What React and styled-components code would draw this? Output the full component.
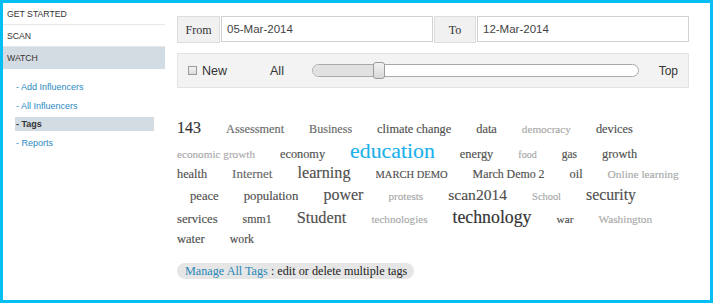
import React from 'react';
import styled, { createGlobalStyle } from 'styled-components';

const GlobalStyle = createGlobalStyle`
  html, body {
    margin: 0;
    padding: 0;
    background: #fff;
  }
  * {
    box-sizing: border-box;
  }
`;

const TONES = {
  dark: '#333333',
  mid: '#6a6a6a',
  norm: '#505050',
  light: '#a9a9a9',
  accent: '#1cb1ec'
};

// [text, font size, tone]
const TAG_ROWS = [
  {
    indent: 0,
    tags: [
      ['143', 16, 'dark'],
      ['Assessment', 12.3, 'mid'],
      ['Business', 12.1, 'mid'],
      ['climate change', 12.3, 'norm'],
      ['data', 12.4, 'norm'],
      ['democracy', 11.2, 'light'],
      ['devices', 12.3, 'norm']
    ]
  },
  {
    indent: 0,
    tags: [
      ['economic growth', 11.2, 'light'],
      ['economy', 12.3, 'norm'],
      ['education', 21.8, 'accent'],
      ['energy', 12.4, 'norm'],
      ['food', 10, 'light'],
      ['gas', 11.5, 'norm'],
      ['growth', 12.4, 'norm']
    ]
  },
  {
    indent: 0,
    tags: [
      ['health', 12.3, 'norm'],
      ['Internet', 13, 'mid'],
      ['learning', 16.2, 'norm'],
      ['MARCH DEMO', 10.5, 'norm'],
      ['March Demo 2', 11.9, 'norm'],
      ['oil', 12.3, 'norm'],
      ['Online learning', 11.4, 'light']
    ]
  },
  {
    indent: 13,
    tags: [
      ['peace', 12.6, 'norm'],
      ['population', 12.8, 'norm'],
      ['power', 16, 'norm'],
      ['protests', 11.2, 'light'],
      ['scan2014', 15.6, 'norm'],
      ['School', 10.4, 'light'],
      ['security', 15.8, 'norm']
    ]
  },
  {
    indent: 0,
    tags: [
      ['services', 12.6, 'norm'],
      ['smm1', 11.9, 'norm'],
      ['Student', 16.3, 'norm'],
      ['technologies', 11.1, 'light'],
      ['technology', 17.8, 'dark'],
      ['war', 11.3, 'norm'],
      ['Washington', 11.3, 'light']
    ]
  },
  {
    indent: 0,
    tags: [
      ['water', 12.5, 'norm'],
      ['work', 11.8, 'norm']
    ]
  }
];

const Frame = styled.div`
  width: 713px;
  height: 303px;
  border: 3px solid #05bff4;
  display: flex;
  background: #fff;
  overflow: hidden;
`;

const Sidebar = styled.div`
  width: 162px;
  flex-shrink: 0;
  display: flex;
  flex-direction: column;
`;

const NavItem = styled.div`
  height: 22px;
  line-height: 23px;
  padding-left: 4px;
  font-family: "Liberation Sans", Arial, sans-serif;
  font-size: 8.7px;
  color: #333;
  border-bottom: 1px solid ${props => (props.$active ? '#d3dce3' : '#e8e8e8')};
  background: ${props => (props.$active ? '#d3dce3' : 'transparent')};
`;

const SubList = styled.div`
  margin-top: 11px;
  padding: 0 11px 0 12px;
  display: flex;
  flex-direction: column;
  gap: 4.6px;
`;

const SubLink = styled.div`
  height: 14px;
  line-height: 14px;
  padding-left: 1px;
  font-family: "Liberation Sans", Arial, sans-serif;
  font-size: 9px;
  color: ${props => (props.$active ? '#333' : '#2b8ac2')};
  font-weight: ${props => (props.$active ? 'bold' : 'normal')};
  background: ${props => (props.$active ? '#d3dce3' : 'transparent')};
`;

const Main = styled.div`
  flex: 1;
  padding: 13px 21px 0 12px;
  display: flex;
  flex-direction: column;
  align-items: stretch;
`;

const DateBar = styled.div`
  display: flex;
  gap: 1px;
  height: 27px;
`;

const DateLabel = styled.div`
  width: ${props => props.$width}px;
  flex-shrink: 0;
  background: #f1f1f1;
  border: 1px solid #dddddd;
  font-family: "Liberation Serif", Georgia, serif;
  font-size: 12px;
  color: #333;
  text-align: center;
  line-height: 26px;
`;

const DateField = styled.div`
  flex: 1;
  height: 26px;
  border: 1px solid #d2d2d2;
  background: #fff;
  padding-left: 5px;
  font-family: "Liberation Sans", Arial, sans-serif;
  font-size: 11.5px;
  color: #444;
  line-height: 24px;
`;

const FilterBar = styled.div`
  margin-top: 10px;
  height: 35px;
  border: 1px solid #e3e3e3;
  background: #f3f3f3;
  display: flex;
  align-items: center;
  padding: 0 10px 0 10px;
  font-family: "Liberation Sans", Arial, sans-serif;
  color: #333;
`;

const CheckBox = styled.span`
  width: 9px;
  height: 9px;
  border: 1px solid #9a9a9a;
  background: linear-gradient(#f4f4f4, #dcdcdc);
  margin-right: 5px;
  flex-shrink: 0;
`;

const BarText = styled.span`
  font-size: ${props => props.$size}px;
  margin-left: ${props => props.$ml || 0}px;
`;

const Track = styled.div`
  position: relative;
  flex: 1;
  height: 13px;
  margin: 0 20px 0 28px;
  border: 1px solid #a9a9a9;
  border-radius: 7px;
  background: #fff;
`;

const TrackFill = styled.div`
  height: 100%;
  background: #e1e1e1;
  border-radius: 6px 0 0 6px;
`;

const Thumb = styled.div`
  position: absolute;
  top: -3px;
  width: 12px;
  height: 17px;
  margin-left: -1px;
  border: 1px solid #9c9c9c;
  border-radius: 3px;
  background: linear-gradient(#f2f2f2, #d9d9d9);
`;

const TagCloud = styled.div`
  margin-top: 29px;
  display: flex;
  flex-direction: column;
`;

const TagRow = styled.div`
  display: flex;
  align-items: baseline;
  column-gap: 25px;
  height: ${props => props.$height}px;
  padding-left: ${props => props.$indent}px;
`;

const Tag = styled.span`
  font-family: "Liberation Serif", Georgia, serif;
  font-size: ${props => props.$size}px;
  color: ${props => TONES[props.$tone]};
  white-space: nowrap;
  line-height: 22px;
  -webkit-text-stroke: 0.15px ${props => TONES[props.$tone]};
`;

const ManagePill = styled.div`
  margin-top: 13px;
  align-self: flex-start;
  height: 16px;
  line-height: 16px;
  padding: 0 7px 0 8px;
  border-radius: 8px;
  background: #e6e6e6;
  font-family: "Liberation Serif", Georgia, serif;
  font-size: 12.2px;
  color: #222;
  white-space: nowrap;
`;

const ManageLink = styled.span`
  color: #2786b8;
`;

const sliderValue = 18.8;

export default function App() {
  return (
    <>
      <GlobalStyle />
      <Frame>
        <Sidebar>
          <NavItem>GET STARTED</NavItem>
          <NavItem>SCAN</NavItem>
          <NavItem $active>WATCH</NavItem>
          <SubList>
            <SubLink>- Add Influencers</SubLink>
            <SubLink>- All Influencers</SubLink>
            <SubLink $active>- Tags</SubLink>
            <SubLink>- Reports</SubLink>
          </SubList>
        </Sidebar>
        <Main>
          <DateBar>
            <DateLabel $width={43}>From</DateLabel>
            <DateField>05-Mar-2014</DateField>
            <DateLabel $width={42}>To</DateLabel>
            <DateField>12-Mar-2014</DateField>
          </DateBar>
          <FilterBar>
            <CheckBox />
            <BarText $size={12.5}>New</BarText>
            <BarText $size={12.5} $ml={43}>All</BarText>
            <Track>
              <TrackFill style={{ width: `${sliderValue}%` }} />
              <Thumb style={{ left: `${sliderValue}%` }} />
            </Track>
            <BarText $size={12}>Top</BarText>
          </FilterBar>
          <TagCloud>
            {TAG_ROWS.map((row, i) => (
              <TagRow key={i} $indent={row.indent} $height={i === 0 ? 23 : 22}>
                {row.tags.map(([text, size, tone]) => (
                  <Tag key={text} $size={size} $tone={tone}>{text}</Tag>
                ))}
              </TagRow>
            ))}
          </TagCloud>
          <ManagePill>
            <ManageLink>Manage All Tags</ManageLink> : edit or delete multiple tags
          </ManagePill>
        </Main>
      </Frame>
    </>
  );
}
